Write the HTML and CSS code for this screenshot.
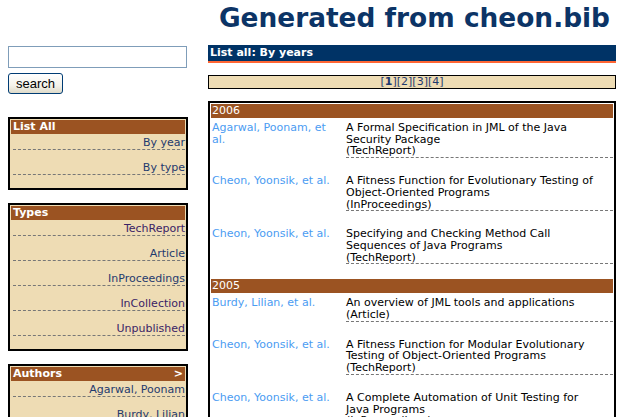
FILE: index.html
```html
<!DOCTYPE html>
<html lang="en">
  <head>
    <meta charset="UTF-8" />
    <title>Generated from cheon.bib</title>
    <link rel="stylesheet" href="styles.css">
  </head>
  <body>
    <div class="header">
      <h1>Generated from cheon.bib</h1>
    </div>
    <div class="page">
      <div class="side">
        <form class="search">
          <input type="text" class="query" />
          <button type="button" class="btn">search</button>
        </form>
        <div class="box">
          <div class="box-title">List All</div>
          <ul class="links">
            <li><a href="#">By year</a></li>
            <li><a href="#">By type</a></li>
          </ul>
        </div>
        <div class="box">
          <div class="box-title">Types</div>
          <ul class="links">
            <li><a href="#" class="seen">TechReport</a></li>
            <li><a href="#">Article</a></li>
            <li><a href="#">InProceedings</a></li>
            <li><a href="#" class="seen">InCollection</a></li>
            <li><a href="#" class="seen">Unpublished</a></li>
          </ul>
        </div>
        <div class="box">
          <div class="box-title"><span>Authors</span><span>&gt;</span></div>
          <ul class="links">
            <li><a href="#">Agarwal, Poonam</a></li>
            <li><a href="#">Burdy, Lilian</a></li>
            <li><a href="#">Cheon, Yoonsik</a></li>
          </ul>
        </div>
      </div>
      <div class="main">
        <div class="bar">List all: By years</div>
        <div class="pages">[<b>1</b>][<a href="#">2</a>][<a href="#">3</a>][<a href="#">4</a>]</div>
        <div class="list">
          <div class="year">2006</div>
          <div class="entry">
            <a href="#" class="author">Agarwal, Poonam, et al.</a>
            <div class="title">A Formal Specification in JML of the Java Security Package<br />(TechReport)</div>
          </div>
          <div class="entry">
            <a href="#" class="author">Cheon, Yoonsik, et al.</a>
            <div class="title">A Fitness Function for Evolutionary Testing of Object-Oriented Programs<br />(InProceedings)</div>
          </div>
          <div class="entry">
            <a href="#" class="author">Cheon, Yoonsik, et al.</a>
            <div class="title">Specifying and Checking Method Call Sequences of Java Programs<br />(TechReport)</div>
          </div>
          <div class="year">2005</div>
          <div class="entry">
            <a href="#" class="author">Burdy, Lilian, et al.</a>
            <div class="title">An overview of JML tools and applications<br />(Article)</div>
          </div>
          <div class="entry">
            <a href="#" class="author">Cheon, Yoonsik, et al.</a>
            <div class="title">A Fitness Function for Modular Evolutionary Testing of Object-Oriented Programs<br />(TechReport)</div>
          </div>
          <div class="entry">
            <a href="#" class="author">Cheon, Yoonsik, et al.</a>
            <div class="title">A Complete Automation of Unit Testing for Java Programs<br />(InProceedings)</div>
          </div>
        </div>
      </div>
    </div>
  </body>
</html>
```

FILE: styles.css
```css
* {
  margin: 0px;
  padding: 0px;
}
html {
  overflow: hidden;
}
body {
  font-family: "DejaVu Sans", Verdana, sans-serif;
  font-size: 11px;
  color: #000;
  padding: 0 7px 0 8px;
}
a {
  text-decoration: none;
}
.header {
  height: 45px;
}
.header h1 {
  font-size: 26.4px;
  line-height: 32px;
  padding: 2px 6px 0 0;
  text-align: right;
  color: #0c3466;
}
.page {
  display: flex;
  gap: 20px;
  align-items: flex-start;
}
.side {
  width: 180px;
  flex: none;
  padding-top: 1px;
}
.query {
  display: block;
  width: 179px;
  height: 22px;
  border: 1px solid #7f9db9;
  box-sizing: border-box;
}
.btn {
  display: block;
  margin-top: 5px;
  width: 55px;
  height: 21px;
  border: 1px solid #003c74;
  border-radius: 3px;
  background: linear-gradient(#ffffff, #f4f2ea 60%, #dedac9);
  font: 13px "Liberation Sans", Arial, sans-serif;
  color: #000;
}
.box {
  margin-top: 23px;
  border: 2px solid #000;
  background-color: #eedcb4;
  padding: 1px 1px 0;
}
.box + .box {
  margin-top: 13px;
}
.box-title {
  display: flex;
  justify-content: space-between;
  background-color: #9b5322;
  color: #fff;
  font-weight: bold;
  height: 14px;
  line-height: 14px;
  padding: 0 2px;
}
.links {
  list-style: none;
  padding: 2px 0 13px 2px;
}
.links li {
  text-align: right;
  line-height: 13px;
  border-bottom: 1px dashed #777;
  margin-top: 11px;
}
.links li:first-child {
  margin-top: 0;
}
.links a {
  color: #1f3a6e;
}
.links a.seen {
  color: #3a2366;
}
.main {
  flex: 1;
}
.bar {
  background-color: #003366;
  color: #fff;
  font-weight: bold;
  height: 16px;
  line-height: 16px;
  padding-left: 2px;
  border-bottom: 2px solid #ff6633;
}
.pages {
  margin-top: 12px;
  border: 1px solid #000;
  background-color: #eedcb4;
  text-align: center;
  height: 12px;
  line-height: 12px;
  color: #1f3a6e;
}
.pages a {
  color: #1f3a6e;
}
.list {
  margin-top: 12px;
  border: 2px solid #000;
  padding: 1px;
}
.year {
  background-color: #9b5322;
  color: #fff;
  height: 14px;
  line-height: 14px;
  padding-left: 1px;
}
.entry + .year {
  margin-top: 15px;
}
.entry {
  display: flex;
  line-height: 11.7px;
  padding: 4px 0 0 1px;
  margin-bottom: 13px;
}
.author {
  flex: none;
  width: 126px;
  padding-right: 8px;
  color: #4b9cf2;
}
.title {
  flex: 1;
  padding-right: 12px;
  border-bottom: 1px dashed #777;
}
```
